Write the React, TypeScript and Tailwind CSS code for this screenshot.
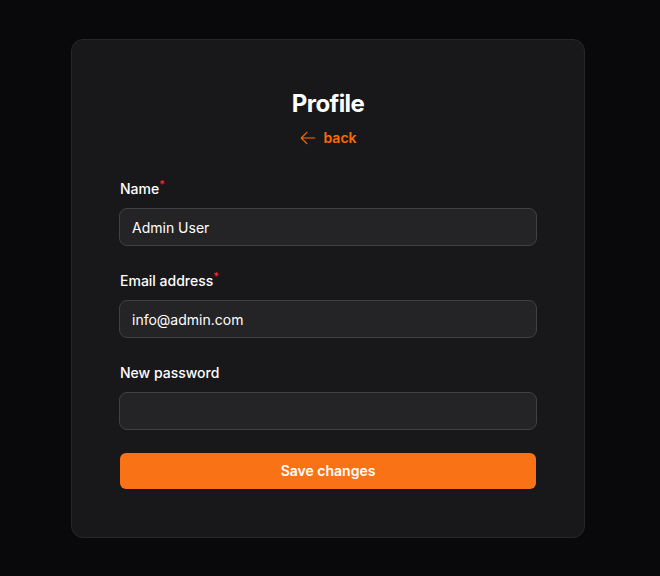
import React from "react";

function Field({ label, required, value, type = "text" }: { label: string; required?: boolean; value: string; type?: string }) {
  return (
    <div>
      <label className="block h-5 pl-px text-sm leading-5 font-medium text-white">
        {label}
        {required && <span className="relative -top-[6px] text-[11px] leading-none text-red-500">*</span>}
      </label>
      <input
        type={type}
        defaultValue={value}
        className="mt-[9px] block w-full h-[38px] rounded-lg border border-[#404046] bg-[#242427] px-3 text-sm text-white outline-none"
      />
    </div>
  );
}

export default function App() {
  return (
    <div className="min-h-[576px] w-full bg-[#09090b] pt-[39px] font-['Inter',sans-serif]">
      <div className="w-[514px] rounded-xl border border-[#27272a] bg-[#18181b] px-[47px] pt-12 pb-12 ml-[71px]">
        <h1 className="text-center text-2xl leading-8 font-bold tracking-tight text-white">Profile</h1>
        <div className="mt-2 flex justify-center">
          <a className="flex items-center gap-1.5 text-sm leading-5 font-semibold text-orange-500">
            <svg width="18" height="18" viewBox="0 0 24 24" fill="none" stroke="currentColor" strokeWidth="1.5" strokeLinecap="round" strokeLinejoin="round">
              <path d="M10.5 19.5 3 12m0 0 7.5-7.5M3 12h18" />
            </svg>
            back
          </a>
        </div>
        <div className="mt-[31px] flex flex-col gap-[25px]">
          <Field label="Name" required value="Admin User" />
          <Field label="Email address" required value="info@admin.com" />
          <Field label="New password" value="" type="password" />
          <button className="mx-px -mt-[2px] h-9 rounded-md bg-[#f97316] text-sm font-semibold text-white">Save changes</button>
        </div>
      </div>
    </div>
  );
}
